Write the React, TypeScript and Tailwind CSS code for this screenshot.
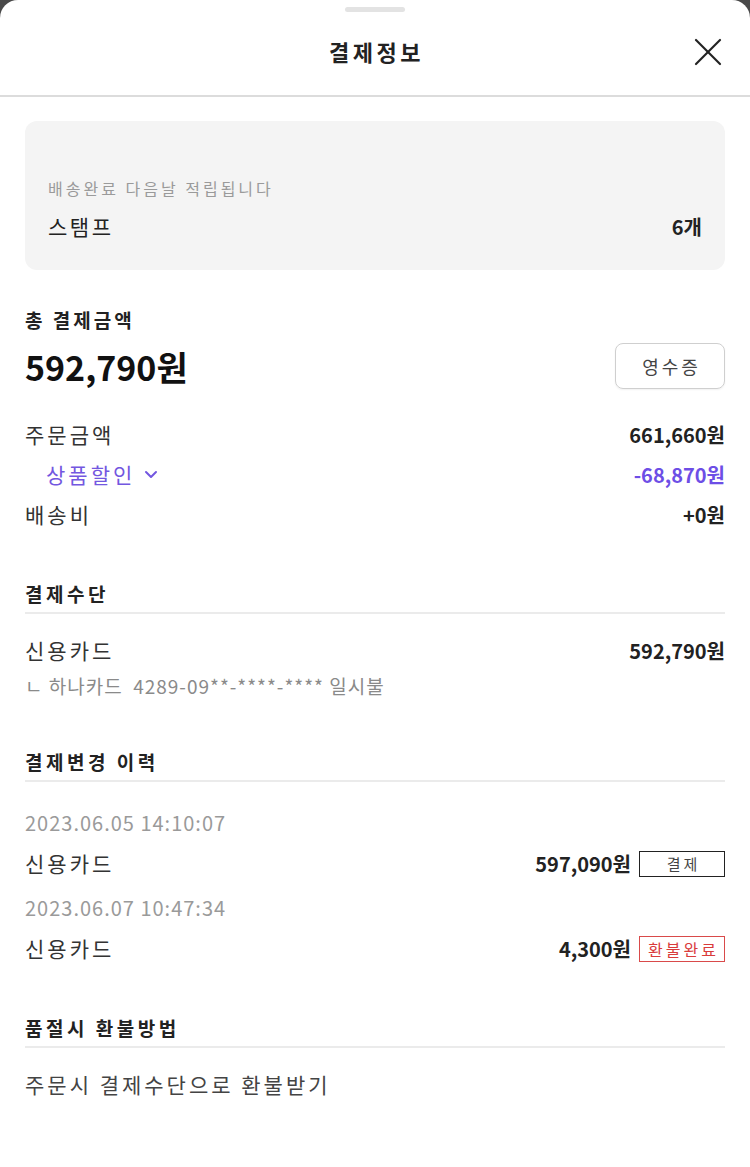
const font = { fontFamily: '"Noto Sans CJK KR", "Noto Sans", sans-serif' };

const Row = ({ label, value, className = "" }: { label: string; value: string; className?: string }) => (
  <div className={`flex h-[40px] items-center justify-between ${className}`}>
    <span className="text-[21px] tracking-[3px] text-[#333]">{label}</span>
    <span className="text-[20px] font-bold text-[#222]">{value}</span>
  </div>
);

const Heading = ({ title, className = "" }: { title: string; className?: string }) => (
  <div className={`border-b-2 border-[#ebebeb] pb-[4px] ${className}`}>
    <h3 className="h-[28px] text-[19px] font-bold leading-[28px] tracking-[3.5px] text-[#222]">{title}</h3>
  </div>
);

const HistoryRow = ({
  date,
  amount,
  badge,
  refund,
  className = "",
}: {
  date: string;
  amount: string;
  badge: string;
  refund?: boolean;
  className?: string;
}) => (
  <div className={className}>
    <div className="h-[30px] text-[20px] leading-[30px] tracking-[1px] text-[#9a9a9a]">{date}</div>
    <div className="mt-[6px] flex h-[40px] items-center justify-between">
      <span className="text-[21px] tracking-[3px] text-[#333]">신용카드</span>
      <div className="flex items-center gap-[8px]">
        <span className="text-[20px] font-bold text-[#222]">{amount}</span>
        {refund ? (
          <span className="flex h-[26px] w-[86px] items-center justify-center border-[1.5px] border-[#d94a4a] pl-[3px] text-[16px] tracking-[3px] text-[#d93b3b]">
            {badge}
          </span>
        ) : (
          <span className="flex h-[26px] w-[86px] items-center justify-center border-[1.5px] border-[#222] pl-[3px] text-[15px] tracking-[3px] text-[#444]">
            {badge}
          </span>
        )}
      </div>
    </div>
  </div>
);

export default function App() {
  return (
    <div className="bg-[#4a4a4a]" style={font}>
      <div className="min-h-[1167px] rounded-t-[18px] bg-white pt-[7px]">
        {/* handle */}
        <div className="mx-auto h-[5px] w-[60px] rounded-full bg-[#e3e3e3]" />

        {/* header */}
        <div className="relative flex h-[85px] items-center justify-center border-b-2 border-[#dcdcdc] pb-[5px]">
          <h1 className="pl-[3px] text-[22px] font-semibold tracking-[3.5px] text-[#222]">결제정보</h1>
          <button className="absolute right-[28px] top-[26px]" aria-label="close">
            <svg width="28" height="28" viewBox="0 0 28 28" fill="none" stroke="#222" strokeWidth="2.2" strokeLinecap="round">
              <line x1="2" y1="2" x2="26" y2="26" />
              <line x1="26" y1="2" x2="2" y2="26" />
            </svg>
          </button>
        </div>

        <div className="px-[25px]">
          {/* stamp card */}
          <div className="mt-[24px] flex h-[149px] flex-col justify-end rounded-[12px] bg-[#f4f4f4] px-[23px] pb-[28px]">
            <p className="h-[24px] text-[16px] leading-[24px] tracking-[3px] text-[#9a9a9a]">배송완료 다음날 적립됩니다</p>
            <div className="mt-[12px] flex h-[30px] items-center justify-between">
              <span className="text-[21px] tracking-[2.5px] text-[#222]">스탬프</span>
              <span className="text-[20px] font-bold text-[#222]">6개</span>
            </div>
          </div>

          {/* total */}
          <h3 className="mt-[36px] h-[28px] text-[19px] font-bold leading-[28px] tracking-[3px] text-[#222]">총 결제금액</h3>
          <div className="mt-[9px] flex h-[46px] items-center justify-between">
            <span className="text-[34px] font-bold text-[#111]">592,790원</span>
            <button className="h-[46px] w-[110px] rounded-[8px] border border-[#cfcfcf] pl-[3px] text-[18px] tracking-[3px] text-[#444] shadow-[0_1px_2px_rgba(0,0,0,0.06)]">
              영수증
            </button>
          </div>

          <Row label="주문금액" value="661,660원" className="mt-[26px]" />
          <div className="flex h-[40px] items-center justify-between">
            <span className="flex items-center gap-[9px] pl-[21px] text-[21px] tracking-[3px] text-[#7357e0]">
              상품할인
              <svg width="14" height="10" viewBox="0 0 14 10" fill="none" stroke="#7357e0" strokeWidth="2" strokeLinecap="round" strokeLinejoin="round">
                <polyline points="2,2 7,7 12,2" />
              </svg>
            </span>
            <span className="text-[20px] font-bold text-[#6d4ee6]">-68,870원</span>
          </div>
          <Row label="배송비" value="+0원" />

          {/* payment method */}
          <Heading title="결제수단" className="mt-[45px]" />
          <Row label="신용카드" value="592,790원" className="mt-[17px]" />
          <div className="h-[30px] text-[19px] leading-[30px] tracking-[1px] text-[#8a8a8a]">
            ㄴ 하나카드 &nbsp;4289-09**-****-**** 일시불
          </div>

          {/* history */}
          <Heading title="결제변경 이력" className="mt-[47px]" />
          <HistoryRow date="2023.06.05 14:10:07" amount="597,090원" badge="결제" className="mt-[26px]" />
          <HistoryRow date="2023.06.07 10:47:34" amount="4,300원" badge="환불완료" refund className="mt-[9px]" />

          {/* refund method */}
          <Heading title="품절시 환불방법" className="mt-[45px]" />
          <p className="mt-[21px] h-[30px] text-[21px] leading-[30px] tracking-[3px] text-[#444]">주문시 결제수단으로 환불받기</p>
        </div>
      </div>
    </div>
  );
}
